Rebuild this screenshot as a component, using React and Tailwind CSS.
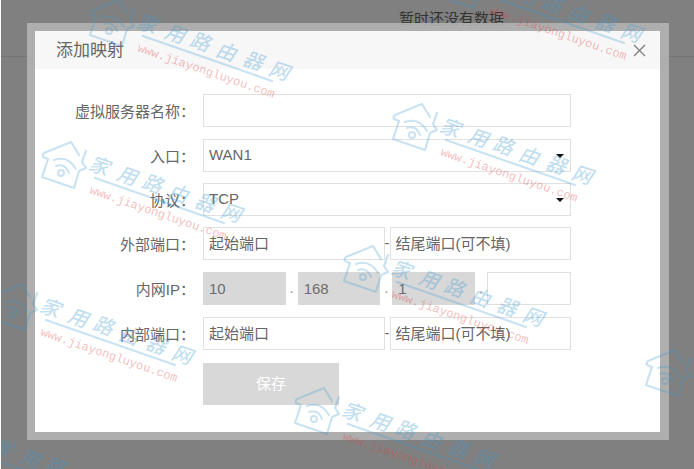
import { useState } from 'react';

const WATERMARKS = [
  { x: 119, y: 0 },
  { x: 471, y: -38 },
  { x: 422, y: 104 },
  { x: 71, y: 142 },
  { x: 373, y: 246 },
  { x: 22, y: 284 },
  { x: 675, y: 350 },
  { x: 324, y: 388 },
  { x: -26, y: 425 },
];

const BRAND = [
  ['家', 28, 24],
  ['用', 56, 34],
  ['路', 81, 42],
  ['由', 107, 52],
  ['器', 134, 61],
  ['网', 160, 71],
];

const inputClass =
  'block h-[33px] w-full min-w-0 border border-[#e0e0e0] bg-white px-[5px] text-[15px] text-[#666] placeholder:text-[#666] placeholder:opacity-100 outline-none focus:border-[#9ccbe4]';

// Origin of the drawing is the peak of the roof
function Watermark({ x, y }) {
  return (
    <g transform={`translate(${x} ${y})`}>
      <g fill="none" stroke="#3c9bd2" strokeOpacity="0.28" strokeWidth="2.2" strokeLinecap="round" strokeLinejoin="round">
        <path d="M8 13 L0 0 L-27 11 Q-29 13 -28 15 L-23 17 L-29 35 L3 46 L8 29 L15 26 L11 20 L15 9" />
        <path d="M-17 18 Q-3 13 5 27" strokeWidth="2" />
        <path d="M-15 24 Q-6 21 -2 31" strokeWidth="2" />
        <circle cx="-10" cy="31" r="3" strokeWidth="2" />
        <path d="M24 36 L153 81" />
      </g>
      <g fill="#3c9bd2" fillOpacity="0.32" fontSize="20" fontStyle="italic" fontWeight="500" textAnchor="middle">
        {BRAND.map(([char, cx, cy]) => (
          <text key={char} transform={`translate(${cx} ${cy}) rotate(19)`} y="7">
            {char}
          </text>
        ))}
      </g>
      <text
        transform="translate(18 51) rotate(19)"
        fill="#e13c3c"
        fillOpacity="0.36"
        className="font-['Liberation_Mono',monospace] text-[12px]"
      >
        www.jiayongluyou.com
      </text>
    </g>
  );
}

function FormRow({ label, htmlFor, className = 'mt-3', children }) {
  return (
    <div className={`flex items-center ${className}`}>
      <label htmlFor={htmlFor} className="w-40 shrink-0 pt-1 text-right whitespace-nowrap">
        {label}：
      </label>
      <div className="ml-2 min-w-0 flex-1">{children}</div>
    </div>
  );
}

function SelectBox({ id, options }) {
  return (
    <div className="relative">
      <select id={id} className={`${inputClass} appearance-none`}>
        {options.map((option) => (
          <option key={option}>{option}</option>
        ))}
      </select>
      <svg className="pointer-events-none absolute top-[15px] right-[7px] h-1 w-2" viewBox="0 0 8 4">
        <path d="M0 0 H8 L4 4 Z" fill="#111" />
      </svg>
    </div>
  );
}

function PortRange({ id, name }) {
  return (
    <div className="flex items-center">
      <input id={id} type="text" placeholder="起始端口" className={inputClass} />
      <span className="w-[5px] shrink-0 text-center">-</span>
      <input type="text" aria-label={`${name}结尾端口`} placeholder="结尾端口(可不填)" className={inputClass} />
    </div>
  );
}

function IpFields() {
  const [host, setHost] = useState('');
  const fixed = ['10', '168', '1'];

  return (
    <div className="flex items-center">
      {fixed.map((part, i) => (
        <div key={part} className="flex flex-1 items-center">
          <input
            id={i === 0 ? 'lan-ip' : undefined}
            type="text"
            aria-label={`内网IP ${i + 1}`}
            value={part}
            disabled
            className="block h-[33px] w-full min-w-0 bg-[#d8d8d8] px-1.5 text-[15px] text-[#6c6c6c]"
          />
          <span className="w-3 shrink-0 text-center text-[#999]">.</span>
        </div>
      ))}
      <div className="w-[84px] shrink-0">
        <input
          type="text"
          aria-label="内网IP 4"
          value={host}
          onChange={(e) => setHost(e.target.value)}
          className={inputClass}
        />
      </div>
    </div>
  );
}

export default function App() {
  return (
    <div
      lang="zh-CN"
      className="relative min-h-screen overflow-hidden border-l border-white bg-[#808080] font-['Liberation_Sans','Noto_Sans_CJK_SC',sans-serif] text-[15px] text-[#666]"
    >
      {/* dimmed page behind the dialog */}
      <div className="absolute inset-x-0 top-0 h-[57px] border-b border-[#747474]">
        <p className="pt-[7px] pl-[208px] text-center leading-6 text-[#333]">暂时还没有数据</p>
      </div>

      <div className="relative pt-[23px] pr-[25px] pb-[28px] pl-[26px]">
        <div className="bg-[#b3b3b3]/90 p-2 pr-[9px]">
          <div role="dialog" aria-labelledby="dialog-title" className="bg-white">
            <div className="flex h-[38px] items-center justify-between bg-[#f7f7f7] pr-3.5 pl-[21px]">
              <h2 id="dialog-title" className="pt-0.5 text-[17px] text-[#666]">
                添加映射
              </h2>
              <button type="button" aria-label="关闭" className="cursor-pointer">
                <svg className="size-[13px]" viewBox="0 0 13 13">
                  <path d="M1 1 L12 12 M12 1 L1 12" stroke="#808080" strokeWidth="1.4" />
                </svg>
              </button>
            </div>

            <form className="pt-[25px] pr-[89px] pb-[27px]" onSubmit={(e) => e.preventDefault()}>
              <FormRow label="虚拟服务器名称" htmlFor="server-name" className="">
                <input id="server-name" type="text" className={inputClass} />
              </FormRow>
              <FormRow label="入口" htmlFor="entry">
                <SelectBox id="entry" options={['WAN1', 'WAN2']} />
              </FormRow>
              <FormRow label="协议" htmlFor="protocol" className="mt-[11px]">
                <SelectBox id="protocol" options={['TCP', 'UDP']} />
              </FormRow>
              <FormRow label="外部端口" htmlFor="outer-port" className="mt-[11px]">
                <PortRange id="outer-port" name="外部" />
              </FormRow>
              <FormRow label="内网IP" htmlFor="lan-ip">
                <IpFields />
              </FormRow>
              <FormRow label="内部端口" htmlFor="inner-port">
                <PortRange id="inner-port" name="内部" />
              </FormRow>
              <button type="submit" className="mt-[13px] ml-[168px] block h-[42px] w-[136px] bg-[#d8d8d8] text-white">
                保存
              </button>
            </form>
          </div>
        </div>
      </div>

      <svg className="pointer-events-none absolute top-0 -left-px h-full w-full overflow-visible" aria-hidden="true">
        {WATERMARKS.map((mark) => (
          <Watermark key={`${mark.x}-${mark.y}`} x={mark.x} y={mark.y} />
        ))}
      </svg>
    </div>
  );
}
